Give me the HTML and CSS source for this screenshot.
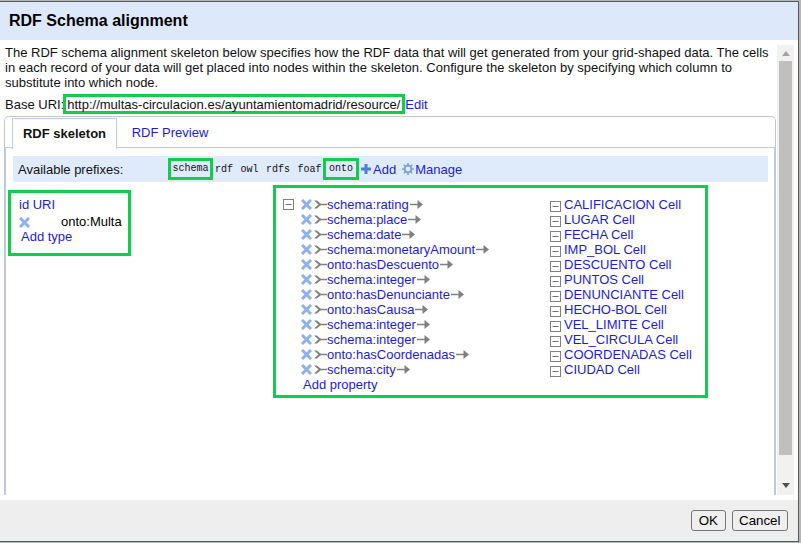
FILE: index.html
```html
<!DOCTYPE html>
<html lang="en">
<head>
    <meta charset="UTF-8">
    <title>RDF Schema alignment</title>
    <link rel="stylesheet" href="styles.css">
</head>
<body>
    <svg class="defs" width="0" height="0">
        <symbol id="ico-x" viewBox="0 0 11 11"><path d="M1 1l9 9M10 1l-9 9" stroke="#8fb0ef" stroke-width="3" fill="none"/></symbol>
        <symbol id="ico-tail" viewBox="0 0 13 11"><path d="M0 1.5l4.5 4-4.5 4h3l4.5-4-4.5-4z" fill="#808080"/><path d="M6 5.5h7" stroke="#808080" stroke-width="1.5"/></symbol>
        <symbol id="ico-head" viewBox="0 0 13 11"><path d="M0 5.5h9" stroke="#808080" stroke-width="1.5"/><path d="M7.5 1l5.5 4.5-5.5 4.5z" fill="#808080"/></symbol>
        <symbol id="ico-minus" viewBox="0 0 11 11"><rect x=".5" y=".5" width="10" height="10" fill="#fff" stroke="#808080"/><path d="M2.5 5.5h6" stroke="#707070"/></symbol>
    </svg>

    <div class="dialog">
        <header class="dialog-title">RDF Schema alignment</header>

        <div class="dialog-body">
            <div class="pane">
                <p class="intro">The RDF schema alignment skeleton below specifies how the RDF data that will get generated from your grid-shaped data. The cells in each record of your data will get placed into nodes within the skeleton. Configure the skeleton by specifying which column to substitute into which node.</p>

                <div class="base-uri">Base URI:<span class="mark uri">http://multas-circulacion.es/ayuntamientomadrid/resource/</span><a href="#">Edit</a></div>

                <div class="tabs">
                    <ul class="tab-strip">
                        <li class="tab active">RDF skeleton</li>
                        <li class="tab"><a href="#">RDF Preview</a></li>
                    </ul>

                    <div class="tab-panel">
                        <div class="prefixes">
                            <span class="prefix-label">Available prefixes:</span>
                            <span class="mark prefix prefix-schema">schema</span>
                            <span class="prefix">rdf</span>
                            <span class="prefix">owl</span>
                            <span class="prefix">rdfs</span>
                            <span class="prefix">foaf</span>
                            <span class="mark prefix prefix-onto">onto</span>
                            <a href="#" class="prefix-action">
                                <svg class="ico-plus" width="12" height="12" viewBox="0 0 12 12"><path d="M6 1v10M1 6h10" stroke="#4a80d4" stroke-width="3"/></svg>Add</a>
                            <a href="#" class="prefix-action">
                                <svg class="ico-gear" width="12" height="12" viewBox="0 0 12 12"><circle cx="6" cy="6" r="3.4" fill="none" stroke="#7fa3cf" stroke-width="2"/><path d="M6 0v2.5M6 9.5V12M0 6h2.5M9.5 6H12M1.8 1.8l1.8 1.8M8.4 8.4l1.8 1.8M10.2 1.8L8.4 3.6M3.6 8.4l-1.8 1.8" stroke="#7fa3cf" stroke-width="1.6"/></svg>Manage</a>
                        </div>

                        <div class="skeleton">
                            <div class="mark subject">
                                <a href="#" class="subject-id">id URI</a>
                                <div class="subject-type">
                                    <svg class="ico"><use href="#ico-x"/></svg>
                                    <span>onto:Multa</span>
                                </div>
                                <a href="#" class="add-type">Add type</a>
                            </div>

                            <div class="mark properties">
                                <svg class="ico tree-toggle"><use href="#ico-minus"/></svg>
                                <div class="prop-list">
                                    <div class="prop"><svg class="ico"><use href="#ico-x"/></svg><svg class="arrow"><use href="#ico-tail"/></svg><a href="#">schema:rating</a><svg class="arrow"><use href="#ico-head"/></svg></div>
                                    <div class="prop"><svg class="ico"><use href="#ico-x"/></svg><svg class="arrow"><use href="#ico-tail"/></svg><a href="#">schema:place</a><svg class="arrow"><use href="#ico-head"/></svg></div>
                                    <div class="prop"><svg class="ico"><use href="#ico-x"/></svg><svg class="arrow"><use href="#ico-tail"/></svg><a href="#">schema:date</a><svg class="arrow"><use href="#ico-head"/></svg></div>
                                    <div class="prop"><svg class="ico"><use href="#ico-x"/></svg><svg class="arrow"><use href="#ico-tail"/></svg><a href="#">schema:monetaryAmount</a><svg class="arrow"><use href="#ico-head"/></svg></div>
                                    <div class="prop"><svg class="ico"><use href="#ico-x"/></svg><svg class="arrow"><use href="#ico-tail"/></svg><a href="#">onto:hasDescuento</a><svg class="arrow"><use href="#ico-head"/></svg></div>
                                    <div class="prop"><svg class="ico"><use href="#ico-x"/></svg><svg class="arrow"><use href="#ico-tail"/></svg><a href="#">schema:integer</a><svg class="arrow"><use href="#ico-head"/></svg></div>
                                    <div class="prop"><svg class="ico"><use href="#ico-x"/></svg><svg class="arrow"><use href="#ico-tail"/></svg><a href="#">onto:hasDenunciante</a><svg class="arrow"><use href="#ico-head"/></svg></div>
                                    <div class="prop"><svg class="ico"><use href="#ico-x"/></svg><svg class="arrow"><use href="#ico-tail"/></svg><a href="#">onto:hasCausa</a><svg class="arrow"><use href="#ico-head"/></svg></div>
                                    <div class="prop"><svg class="ico"><use href="#ico-x"/></svg><svg class="arrow"><use href="#ico-tail"/></svg><a href="#">schema:integer</a><svg class="arrow"><use href="#ico-head"/></svg></div>
                                    <div class="prop"><svg class="ico"><use href="#ico-x"/></svg><svg class="arrow"><use href="#ico-tail"/></svg><a href="#">schema:integer</a><svg class="arrow"><use href="#ico-head"/></svg></div>
                                    <div class="prop"><svg class="ico"><use href="#ico-x"/></svg><svg class="arrow"><use href="#ico-tail"/></svg><a href="#">onto:hasCoordenadas</a><svg class="arrow"><use href="#ico-head"/></svg></div>
                                    <div class="prop"><svg class="ico"><use href="#ico-x"/></svg><svg class="arrow"><use href="#ico-tail"/></svg><a href="#">schema:city</a><svg class="arrow"><use href="#ico-head"/></svg></div>
                                    <a href="#" class="add-prop">Add property</a>
                                </div>
                                <div class="cell-list">
                                    <div class="cell"><svg class="ico"><use href="#ico-minus"/></svg><a href="#">CALIFICACION Cell</a></div>
                                    <div class="cell"><svg class="ico"><use href="#ico-minus"/></svg><a href="#">LUGAR Cell</a></div>
                                    <div class="cell"><svg class="ico"><use href="#ico-minus"/></svg><a href="#">FECHA Cell</a></div>
                                    <div class="cell"><svg class="ico"><use href="#ico-minus"/></svg><a href="#">IMP_BOL Cell</a></div>
                                    <div class="cell"><svg class="ico"><use href="#ico-minus"/></svg><a href="#">DESCUENTO Cell</a></div>
                                    <div class="cell"><svg class="ico"><use href="#ico-minus"/></svg><a href="#">PUNTOS Cell</a></div>
                                    <div class="cell"><svg class="ico"><use href="#ico-minus"/></svg><a href="#">DENUNCIANTE Cell</a></div>
                                    <div class="cell"><svg class="ico"><use href="#ico-minus"/></svg><a href="#">HECHO-BOL Cell</a></div>
                                    <div class="cell"><svg class="ico"><use href="#ico-minus"/></svg><a href="#">VEL_LIMITE Cell</a></div>
                                    <div class="cell"><svg class="ico"><use href="#ico-minus"/></svg><a href="#">VEL_CIRCULA Cell</a></div>
                                    <div class="cell"><svg class="ico"><use href="#ico-minus"/></svg><a href="#">COORDENADAS Cell</a></div>
                                    <div class="cell"><svg class="ico"><use href="#ico-minus"/></svg><a href="#">CIUDAD Cell</a></div>
                                </div>
                            </div>
                        </div>
                    </div>
                </div>
            </div>

            <div class="scrollbar">
                <span class="scroll-up"></span>
                <span class="scroll-thumb"></span>
                <span class="scroll-down"></span>
            </div>
        </div>

        <footer class="dialog-footer">
            <button type="button" class="btn">OK</button>
            <button type="button" class="btn">Cancel</button>
        </footer>
    </div>
</body>
</html>
```

FILE: styles.css
```css
html, body {
    height: 100%;
}

body {
    margin: 0;
    background-color: #b9b6ae;
    font-family: "Liberation Sans", Arial, sans-serif;
    font-size: 13px;
    line-height: 15px;
    color: #111;
    overflow: hidden;
}

a {
    color: #1c1cdc;
    text-decoration: none;
}

.defs {
    position: absolute;
}

.dialog {
    display: flex;
    flex-direction: column;
    width: 798px;
    height: 539px;
    margin-top: 1px;
    background-color: #fff;
    border-top: 1px solid #4c5c6c;
    border-right: 1px solid #4c5c6c;
    border-bottom: 1px solid #4c5c6c;
}

.dialog-title {
    flex: none;
    height: 38px;
    padding-left: 9px;
    background-color: #dde9fb;
    font-size: 16px;
    font-weight: bold;
    line-height: 37px;
    color: #000;
}

.dialog-body {
    flex: 1;
    display: flex;
    min-height: 0;
    padding: 5px 4px 5px 4px;
}

.pane {
    flex: 1;
    min-width: 0;
    display: flex;
    flex-direction: column;
    padding-left: 1px;
}

.intro {
    margin: 0;
    width: 770px;
}

/* green annotation boxes */
.mark {
    border: 3px solid #12cc4c;
}

.base-uri {
    display: flex;
    align-items: center;
    height: 20px;
    margin-top: 4px;
}

.uri {
    height: 20px;
    box-sizing: border-box;
    padding: 0 1px;
    margin-left: -1px;
    line-height: 15px;
    width: 342px;
    white-space: nowrap;
}

.tabs {
    flex: 1;
    display: flex;
    flex-direction: column;
    margin-left: -1px;
    margin-top: 2px;
    border: 1px solid #c6c6c6;
    border-bottom: none;
    border-radius: 5px 5px 0 0;
}

.tab-strip {
    flex: none;
    display: flex;
    list-style: none;
    height: 31px;
    margin: 0;
    padding: 1px 0 0 7px;
    box-sizing: border-box;
}

.tab {
    width: 105px;
    box-sizing: border-box;
    text-align: center;
    line-height: 29px;
    position: relative;
}

.tab.active {
    height: 31px;
    border: 1px solid #b9ccef;
    border-bottom: none;
    background-color: #fff;
    font-weight: bold;
    z-index: 1;
}

.tab:not(.active) {
    width: 100px;
    margin-left: 3px;
}

.tab-panel {
    flex: 1;
    border: 1px solid #b9ccef;
    border-bottom: none;
    padding: 8px 6px 0 7px;
    margin-top: -1px;
}

.prefixes {
    display: flex;
    align-items: center;
    height: 26px;
    padding-left: 5px;
    background-color: #dfeafb;
}

.prefix-label {
    width: 150px;
}

.prefix {
    font-family: "Liberation Mono", monospace;
    font-size: 10px;
    margin-right: 7.5px;
}

.prefix.mark {
    padding: 2px 1.5px;
    line-height: 12px;
}

.prefix-schema {
    margin-right: 2px;
}

.prefix-onto {
    box-sizing: border-box;
    width: 36px;
    text-align: center;
    margin-left: -6px;
    margin-right: 1px;
}

.prefix-action {
    display: flex;
    align-items: center;
    gap: 1px;
    margin-right: 6px;
}

.skeleton {
    display: flex;
    align-items: flex-start;
    margin-top: 3px;
    margin-left: -5px;
}

.subject {
    width: 123px;
    height: 66px;
    box-sizing: border-box;
    margin-top: 5px;
    padding: 4px 0 0 8px;
    flex: none;
}

.subject-id {
    display: block;
}

.subject-type {
    display: flex;
    align-items: center;
    height: 15px;
    margin-top: 2px;
}

.subject-type .ico {
    margin-top: 2px;
}

.subject-type span {
    margin-left: 31px;
    color: #000;
}

.add-type {
    display: block;
    margin-left: 2px;
}

.ico {
    width: 11px;
    height: 11px;
    flex: none;
}

.arrow {
    width: 13px;
    height: 11px;
    flex: none;
}

.properties {
    width: 435px;
    height: 213px;
    box-sizing: border-box;
    margin-left: 142px;
    padding: 9px 0 0 7px;
    display: flex;
    flex: none;
}

.tree-toggle {
    margin-top: 2px;
}

.prop-list {
    width: 249px;
    margin-left: 7px;
}

.prop, .cell {
    display: flex;
    align-items: center;
    height: 15px;
}

.prop .ico + .arrow {
    margin-left: 2px;
}

.prop a + .arrow {
    margin-left: 1px;
}

.add-prop {
    display: block;
    margin-left: 2px;
}

.cell .ico {
    margin-top: 3px;
    margin-right: 3px;
}

.scrollbar {
    flex: none;
    width: 17px;
    margin-left: 1px;
    display: flex;
    flex-direction: column;
    align-items: center;
    background-color: #f1f1f1;
}

.scroll-up, .scroll-down {
    width: 0;
    height: 0;
    border-left: 4px solid transparent;
    border-right: 4px solid transparent;
}

.scroll-up {
    margin: 6px 0 5px;
    border-bottom: 5px solid #a3a3a3;
}

.scroll-thumb {
    width: 13px;
    height: 394px;
    background-color: #bfbfbf;
}

.scroll-down {
    margin-top: 28px;
    border-top: 5px solid #505050;
}

.dialog-footer {
    flex: none;
    display: flex;
    justify-content: flex-end;
    gap: 6px;
    height: 41px;
    box-sizing: border-box;
    padding: 10px 10px 0 0;
    background-color: #eee;
}

.btn {
    height: 21px;
    padding: 0 6.5px;
    background-color: #efefef;
    border: 1px solid #767676;
    border-radius: 3px;
    font-family: inherit;
    font-size: 13.33px;
    color: #000;
}
```
